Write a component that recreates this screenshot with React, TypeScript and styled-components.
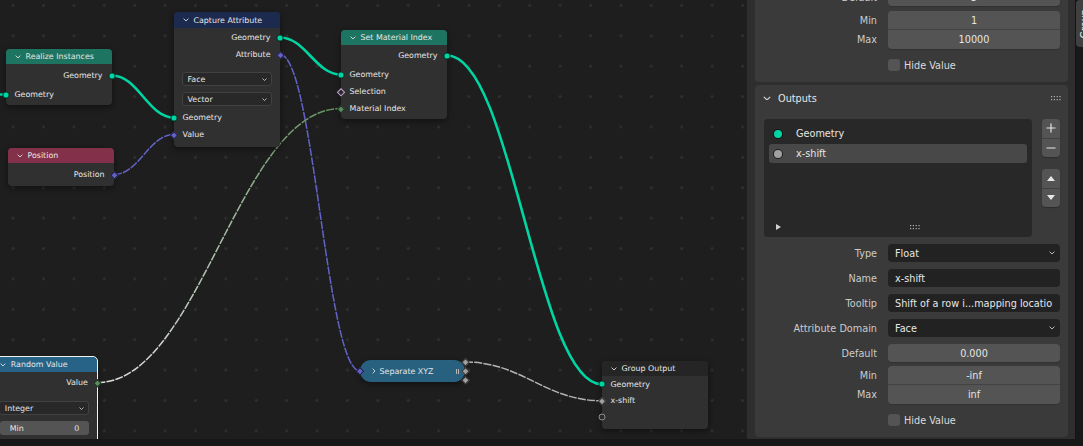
import React from 'react'
import styled, {createGlobalStyle, css} from 'styled-components'

const GEO = '#00d6a3'
const VEC = '#6363c7'
const FLOAT = '#a1a1a1'
const INT = '#598c5c'
const BOOL = '#cca6d6'

type Kind = 'geo' | 'vec' | 'float' | 'int' | 'bool' | 'empty'

const fill: Record<Kind, string> = {
    geo: GEO,
    vec: VEC,
    float: FLOAT,
    int: INT,
    bool: '#2b2b2b',
    empty: '#2b2b2b',
}

const GlobalStyle = createGlobalStyle`
    html, body {
        margin: 0;
        padding: 0;
        background: #161616;
    }
    body {
        font-family: "DejaVu Sans", "Liberation Sans", sans-serif;
    }
    * {
        box-sizing: border-box;
    }
`

const Screen = styled.div`
    width: 1083px;
    height: 446px;
    overflow: hidden;
    background: #161616;
    display: flex;
    flex-direction: column;
`

const Main = styled.div`
    display: flex;
    height: 439px;
    flex: none;
`

const BottomGap = styled.div`
    height: 7px;
    background: #171717;
`

// ---------- node editor ----------

const Canvas = styled.div`
    position: relative;
    width: 747px;
    height: 439px;
    flex: none;
    overflow: hidden;
    background-color: #1e1e1e;
    background-image: radial-gradient(circle, #2f2f2f 1.1px, transparent 1.7px);
    background-size: 30.4px 30.4px;
    background-position: -2.1px -9.8px;
    color: #e6e6e6;
    font-size: 7.9px;
`

const Wires = styled.svg`
    position: absolute;
    left: 0;
    top: 0;
    width: 747px;
    height: 439px;
    overflow: visible;
    pointer-events: none;
`

const Node = styled.div<{$x: number; $y: number; $active?: boolean}>`
    position: absolute;
    left: ${p => p.$x}px;
    top: ${p => p.$y}px;
    width: 106px;
    background: #303030;
    border-radius: 4px;
    box-shadow: 0 2px 6px rgba(0, 0, 0, .45);
    ${p => p.$active && css`
        outline: 1px solid #f2f2f2;
    `}
`

const NodeHead = styled.div<{$color: string; $h?: number}>`
    height: ${p => p.$h ?? 15}px;
    background: ${p => p.$color};
    border-radius: 4px 4px 0 0;
    display: flex;
    align-items: center;
    gap: 5px;
    padding-left: 8.5px;
    white-space: nowrap;
`

const NodeBody = styled.div<{$pt: number; $pb: number}>`
    padding: ${p => p.$pt}px 0 ${p => p.$pb}px;
    display: flex;
    flex-direction: column;
`

const Slot = styled.div<{$out?: boolean; $h?: number}>`
    position: relative;
    height: ${p => p.$h ?? 17}px;
    display: flex;
    align-items: center;
    justify-content: ${p => p.$out ? 'flex-end' : 'flex-start'};
    padding: 0 9.5px 0 8.5px;
    white-space: nowrap;
`

const Gap = styled.div<{$h: number}>`
    height: ${p => p.$h}px;
    flex: none;
`

const Socket = styled.span<{$kind: Kind; $side: 'in' | 'out'; $at?: number}>`
    position: absolute;
    top: ${p => p.$at !== undefined ? `${p.$at}px` : '50%'};
    ${p => p.$side === 'in' ? 'left: 0;' : 'right: 0;'}
    background: ${p => fill[p.$kind]};
    ${p => p.$kind === 'geo' || p.$kind === 'empty'
        ? css`
            width: 7px;
            height: 7px;
            border-radius: 50%;
            transform: translate(${p.$side === 'in' ? '-50%' : '50%'}, -50%);
        `
        : css`
            width: 5.5px;
            height: 5.5px;
            transform: translate(${p.$side === 'in' ? '-50%' : '50%'}, -50%) rotate(45deg);
        `}
    border: ${p => p.$kind === 'bool'
        ? `1.3px solid ${BOOL}`
        : p.$kind === 'empty' ? '1px solid #8e8e8e' : '0.7px solid rgba(0, 0, 0, .7)'};
`

const NodeSelect = styled.div`
    margin: 0 8px 0 7.5px;
    height: 14px;
    border-radius: 3px;
    background: #282828;
    border: 1px solid #414141;
    display: flex;
    align-items: center;
    justify-content: space-between;
    padding: 0 4px 0 5px;
`

const NodeNumber = styled.div`
    margin: 0 8px 0 8.5px;
    height: 14px;
    border-radius: 3px;
    background: #545454;
    display: flex;
    align-items: center;
    justify-content: space-between;
    padding: 0 10px;
`

const Pill = styled.div<{$x: number; $y: number}>`
    position: absolute;
    left: ${p => p.$x}px;
    top: ${p => p.$y}px;
    width: 105px;
    height: 22px;
    border-radius: 11px;
    background: #27617f;
    box-shadow: 0 2px 6px rgba(0, 0, 0, .45);
    display: flex;
    align-items: center;
    gap: 4px;
    padding-left: 12px;
    white-space: nowrap;
`

const Bars = styled.span`
    margin-left: auto;
    margin-right: 6px;
    display: flex;
    gap: 1.5px;
    & > i {
        width: 1px;
        height: 5px;
        background: #b8b8b8;
    }
`

const Chev = ({dir = 'down', w = 6, color = '#e0e0e0'}: {dir?: 'down' | 'right'; w?: number; color?: string}) =>
    dir === 'down'
        ? <svg width={w} height={w * 0.6} viewBox="0 0 10 6"><polyline points="1,1 5,5 9,1" fill="none" stroke={color} strokeWidth="1.5"/></svg>
        : <svg width={w * 0.6} height={w} viewBox="0 0 6 10"><polyline points="1,1 5,5 1,9" fill="none" stroke={color} strokeWidth="1.5"/></svg>

const wire = (x0: number, y0: number, x1: number, y1: number) => {
    const d = Math.abs(x1 - x0) * 0.42
    return `M${x0},${y0} C${x0 + d},${y0} ${x1 - d},${y1} ${x1},${y1}`
}

const NodeEditor = () => (
    <Canvas>
        <Wires viewBox="0 0 747 439">
            <defs>
                <linearGradient id="randLink" gradientUnits="userSpaceOnUse" x1="97" y1="382" x2="341" y2="108">
                    <stop offset="0" stopColor="#dedede"/>
                    <stop offset="0.5" stopColor="#a9bfa9"/>
                    <stop offset="1" stopColor="#5f905f"/>
                </linearGradient>
            </defs>
            <path d={wire(-40, 94.5, 6, 94.5)} stroke={GEO} strokeWidth="2.6" fill="none"/>
            <path d={wire(112, 75.5, 174, 117.5)} stroke={GEO} strokeWidth="2.6" fill="none"/>
            <path d={wire(280, 37.5, 341, 74.5)} stroke={GEO} strokeWidth="2.6" fill="none"/>
            <path d={wire(447, 55.5, 602, 384.3)} stroke={GEO} strokeWidth="2.6" fill="none"/>
            <path d={wire(114, 174.5, 174, 134.5)} stroke={VEC} strokeWidth="1.5" fill="none" strokeDasharray="8 1.2"/>
            <path d={wire(280, 54.5, 360, 371)} stroke={VEC} strokeWidth="1.5" fill="none" strokeDasharray="8 1.2"/>
            <path d={wire(97.3, 382.5, 341, 108.5)} stroke="url(#randLink)" strokeWidth="1.5" fill="none" strokeDasharray="8 1.2"/>
            <path d={wire(465, 362, 602, 400.8)} stroke="#b4b4b4" strokeWidth="1.5" fill="none" strokeDasharray="8 1.2"/>
        </Wires>

        <Node $x={6} $y={49}>
            <NodeHead $color="#1d7460"><Chev/>Realize Instances</NodeHead>
            <NodeBody $pt={3} $pb={2}>
                <Slot $out>Geometry<Socket $kind="geo" $side="out"/></Slot>
                <Gap $h={2}/>
                <Slot>Geometry<Socket $kind="geo" $side="in"/></Slot>
            </NodeBody>
        </Node>

        <Node $x={8} $y={148}>
            <NodeHead $color="#83314a"><Chev/>Position</NodeHead>
            <NodeBody $pt={3} $pb={3}>
                <Slot $out>Position<Socket $kind="vec" $side="out"/></Slot>
            </NodeBody>
        </Node>

        <Node $x={174} $y={12}>
            <NodeHead $color="#1d2a4f" $h={16}><Chev/>Capture Attribute</NodeHead>
            <NodeBody $pt={1} $pb={4}>
                <Slot $out>Geometry<Socket $kind="geo" $side="out"/></Slot>
                <Slot $out>Attribute<Socket $kind="vec" $side="out"/></Slot>
                <Gap $h={9}/>
                <NodeSelect>Face<Chev w={5}/></NodeSelect>
                <Gap $h={6}/>
                <NodeSelect>Vector<Chev w={5}/></NodeSelect>
                <Gap $h={3}/>
                <Slot>Geometry<Socket $kind="geo" $side="in"/></Slot>
                <Slot>Value<Socket $kind="vec" $side="in"/></Slot>
            </NodeBody>
        </Node>

        <Node $x={341} $y={30}>
            <NodeHead $color="#1d7460"><Chev/>Set Material Index</NodeHead>
            <NodeBody $pt={2} $pb={2}>
                <Slot $out>Geometry<Socket $kind="geo" $side="out"/></Slot>
                <Gap $h={2}/>
                <Slot>Geometry<Socket $kind="geo" $side="in"/></Slot>
                <Slot>Selection<Socket $kind="bool" $side="in"/></Slot>
                <Slot>Material Index<Socket $kind="int" $side="in"/></Slot>
            </NodeBody>
        </Node>

        <Node $x={-8.7} $y={357} $active>
            <NodeHead $color="#266386"><Chev/>Random Value</NodeHead>
            <NodeBody $pt={2} $pb={30}>
                <Slot $out>Value<Socket $kind="int" $side="out"/></Slot>
                <Gap $h={10}/>
                <NodeSelect>Integer<Chev w={5}/></NodeSelect>
                <Gap $h={6}/>
                <NodeNumber><span>Min</span><span>0</span></NodeNumber>
            </NodeBody>
        </Node>

        <Pill $x={360} $y={360}>
            <Socket $kind="vec" $side="in"/>
            <Chev dir="right" w={6}/>
            Separate XYZ
            <Bars><i/><i/></Bars>
            <Socket $kind="float" $side="out" $at={2}/>
            <Socket $kind="float" $side="out" $at={11}/>
            <Socket $kind="float" $side="out" $at={19.5}/>
        </Pill>

        <Node $x={602} $y={361}>
            <NodeHead $color="#252525"><Chev/>Group Output</NodeHead>
            <NodeBody $pt={0} $pb={3}>
                <Slot $h={16.5}>Geometry<Socket $kind="geo" $side="in"/></Slot>
                <Slot $h={16.5}>x-shift<Socket $kind="float" $side="in"/></Slot>
                <Slot $h={16.5}><Socket $kind="empty" $side="in"/></Slot>
            </NodeBody>
        </Node>
    </Canvas>
)

// ---------- sidebar ----------

const Sidebar = styled.div`
    display: flex;
    width: 336px;
    flex: none;
    background: #2e2e2e;
    color: #e6e6e6;
    font-size: 9.7px;
`

const Region = styled.div`
    width: 328px;
    flex: none;
    padding: 0 7px 0 8px;
    display: flex;
    flex-direction: column;
    gap: 3px;
    overflow: hidden;
`

const TabStrip = styled.div`
    flex: 1;
    background: #181818;
    border-left: 1px solid #141414;
    overflow: hidden;
`

const Tab = styled.div`
    height: 47px;
    background: #404040;
    border-radius: 4px 0 0 4px;
    display: flex;
    flex-direction: column;
    justify-content: center;
    padding-left: 3px;
    & > span {
        writing-mode: vertical-rl;
        transform: rotate(180deg);
        white-space: nowrap;
        color: #eeeeee;
    }
`

const Panel = styled.div<{$shift?: number}>`
    background: #3a3a3a;
    border-radius: 4px;
    margin-top: ${p => p.$shift ?? 0}px;
    padding-bottom: 11px;
    display: flex;
    flex-direction: column;
    flex: none;
`

const PanelHead = styled.div`
    height: 26px;
    display: flex;
    align-items: center;
    gap: 7px;
    padding: 0 6px 0 8px;
    & > b {
        font-weight: normal;
        flex: 1;
    }
`

const PropRow = styled.div`
    display: grid;
    grid-template-columns: 1fr 172px;
    column-gap: 11px;
    padding-right: 8px;
    align-items: center;
`

const Label = styled.div`
    text-align: right;
    color: #cccccc;
    white-space: nowrap;
`

const DarkField = styled.div`
    height: 18px;
    background: #222222;
    border-radius: 4px;
    display: flex;
    align-items: center;
    justify-content: space-between;
    gap: 4px;
    padding: 0 5px 0 7px;
    white-space: nowrap;
    overflow: hidden;
`

const NumField = styled.div<{$pos?: 'single' | 'top' | 'bottom'}>`
    height: ${p => p.$pos === 'top' || p.$pos === 'bottom' ? 19 : 18}px;
    background: #545454;
    display: flex;
    align-items: center;
    justify-content: center;
    border-radius: ${p => p.$pos === 'top' ? '4px 4px 0 0' : p.$pos === 'bottom' ? '0 0 4px 4px' : '4px'};
    ${p => p.$pos === 'top' && css`
        border-bottom: 1px solid #434343;
    `}
    box-shadow: 0 1px 1px rgba(0, 0, 0, .15);
`

const CheckLine = styled.div`
    display: flex;
    align-items: center;
    gap: 4px;
    height: 12px;
    color: #dcdcdc;
`

const Check = styled.span`
    width: 12px;
    height: 12px;
    border-radius: 3px;
    background: #545454;
`

const ListArea = styled.div`
    display: flex;
    gap: 10px;
    padding: 0 8px 0 9px;
`

const List = styled.div`
    flex: 1;
    height: 118px;
    background: #282828;
    border-radius: 4px;
    padding: 5px;
    display: flex;
    flex-direction: column;
    gap: 1px;
`

const ListRow = styled.div<{$active?: boolean}>`
    height: 19px;
    display: flex;
    align-items: center;
    padding-left: 5px;
    border-radius: 3px;
    background: ${p => p.$active ? '#484848' : 'transparent'};
`

const Dot = styled.span<{$color: string}>`
    width: 8px;
    height: 8px;
    border-radius: 50%;
    flex: none;
    background: ${p => p.$color};
    box-shadow: 0 0 0 1px rgba(0, 0, 0, .55);
    margin-right: 14px;
`

const ListFoot = styled.div`
    margin-top: auto;
    height: 10px;
    display: grid;
    grid-template-columns: 134px auto;
    align-items: center;
    padding-left: 7px;
`

const SideCol = styled.div`
    width: 18px;
    display: flex;
    flex-direction: column;
    gap: 12px;
`

const BtnGroup = styled.div`
    display: flex;
    flex-direction: column;
    gap: 1px;
    border-radius: 4px;
    overflow: hidden;
    background: #404040;
    box-shadow: 0 1px 1px rgba(0, 0, 0, .25);
`

const IconBtn = styled.div`
    height: 18.5px;
    background: #545454;
    display: flex;
    align-items: center;
    justify-content: center;
`

const Grip = () => (
    <svg width="11" height="5" viewBox="0 0 11 5">
        {[0, 1, 2, 3].map(i => [0, 1].map(j => (
            <rect key={`${i}-${j}`} x={i * 2.8} y={j * 3} width="1.2" height="1.2" fill="#b4b4b4"/>
        )))}
    </svg>
)

const Sidebar_ = () => (
    <Sidebar>
        <Region>
            <Panel $shift={-12}>
                <PropRow>
                    <Label>Default</Label>
                    <NumField>5</NumField>
                </PropRow>
                <Gap $h={5}/>
                <PropRow>
                    <Label>Min</Label>
                    <NumField $pos="top">1</NumField>
                </PropRow>
                <PropRow>
                    <Label>Max</Label>
                    <NumField $pos="bottom">10000</NumField>
                </PropRow>
                <Gap $h={10}/>
                <PropRow>
                    <span/>
                    <CheckLine><Check/>Hide Value</CheckLine>
                </PropRow>
            </Panel>

            <Panel>
                <PanelHead>
                    <Chev w={8} color="#cfcfcf"/>
                    <b>Outputs</b>
                    <Grip/>
                </PanelHead>
                <Gap $h={8}/>
                <ListArea>
                    <List>
                        <ListRow><Dot $color={GEO}/>Geometry</ListRow>
                        <ListRow $active><Dot $color={FLOAT}/>x-shift</ListRow>
                        <ListFoot>
                            <svg width="5" height="6" viewBox="0 0 5 6"><polygon points="0,0 5,3 0,6" fill="#d0d0d0"/></svg>
                            <Grip/>
                        </ListFoot>
                    </List>
                    <SideCol>
                        <BtnGroup>
                            <IconBtn>
                                <svg width="10" height="10" viewBox="0 0 10 10">
                                    <path d="M5 0.5V9.5M0.5 5H9.5" stroke="#e6e6e6" strokeWidth="1.2"/>
                                </svg>
                            </IconBtn>
                            <IconBtn>
                                <svg width="10" height="10" viewBox="0 0 10 10">
                                    <path d="M0.5 5H9.5" stroke="#e6e6e6" strokeWidth="1.2"/>
                                </svg>
                            </IconBtn>
                        </BtnGroup>
                        <BtnGroup>
                            <IconBtn>
                                <svg width="8" height="5" viewBox="0 0 8 5"><polygon points="0,5 4,0 8,5" fill="#e6e6e6"/></svg>
                            </IconBtn>
                            <IconBtn>
                                <svg width="8" height="5" viewBox="0 0 8 5"><polygon points="0,0 8,0 4,5" fill="#e6e6e6"/></svg>
                            </IconBtn>
                        </BtnGroup>
                    </SideCol>
                </ListArea>
                <Gap $h={7}/>
                <PropRow>
                    <Label>Type</Label>
                    <DarkField>Float<Chev w={6} color="#cfcfcf"/></DarkField>
                </PropRow>
                <Gap $h={7}/>
                <PropRow>
                    <Label>Name</Label>
                    <DarkField>x-shift</DarkField>
                </PropRow>
                <Gap $h={7}/>
                <PropRow>
                    <Label>Tooltip</Label>
                    <DarkField>Shift of a row i...mapping locatio</DarkField>
                </PropRow>
                <Gap $h={7}/>
                <PropRow>
                    <Label>Attribute Domain</Label>
                    <DarkField>Face<Chev w={6} color="#cfcfcf"/></DarkField>
                </PropRow>
                <Gap $h={7}/>
                <PropRow>
                    <Label>Default</Label>
                    <NumField>0.000</NumField>
                </PropRow>
                <Gap $h={4}/>
                <PropRow>
                    <Label>Min</Label>
                    <NumField $pos="top">-inf</NumField>
                </PropRow>
                <PropRow>
                    <Label>Max</Label>
                    <NumField $pos="bottom">inf</NumField>
                </PropRow>
                <Gap $h={10}/>
                <PropRow>
                    <span/>
                    <CheckLine><Check/>Hide Value</CheckLine>
                </PropRow>
            </Panel>
        </Region>
        <TabStrip>
            <Tab><span>Group</span></Tab>
        </TabStrip>
    </Sidebar>
)

export default function App() {
    return (
        <Screen>
            <GlobalStyle/>
            <Main>
                <NodeEditor/>
                <Sidebar_/>
            </Main>
            <BottomGap/>
        </Screen>
    )
}
